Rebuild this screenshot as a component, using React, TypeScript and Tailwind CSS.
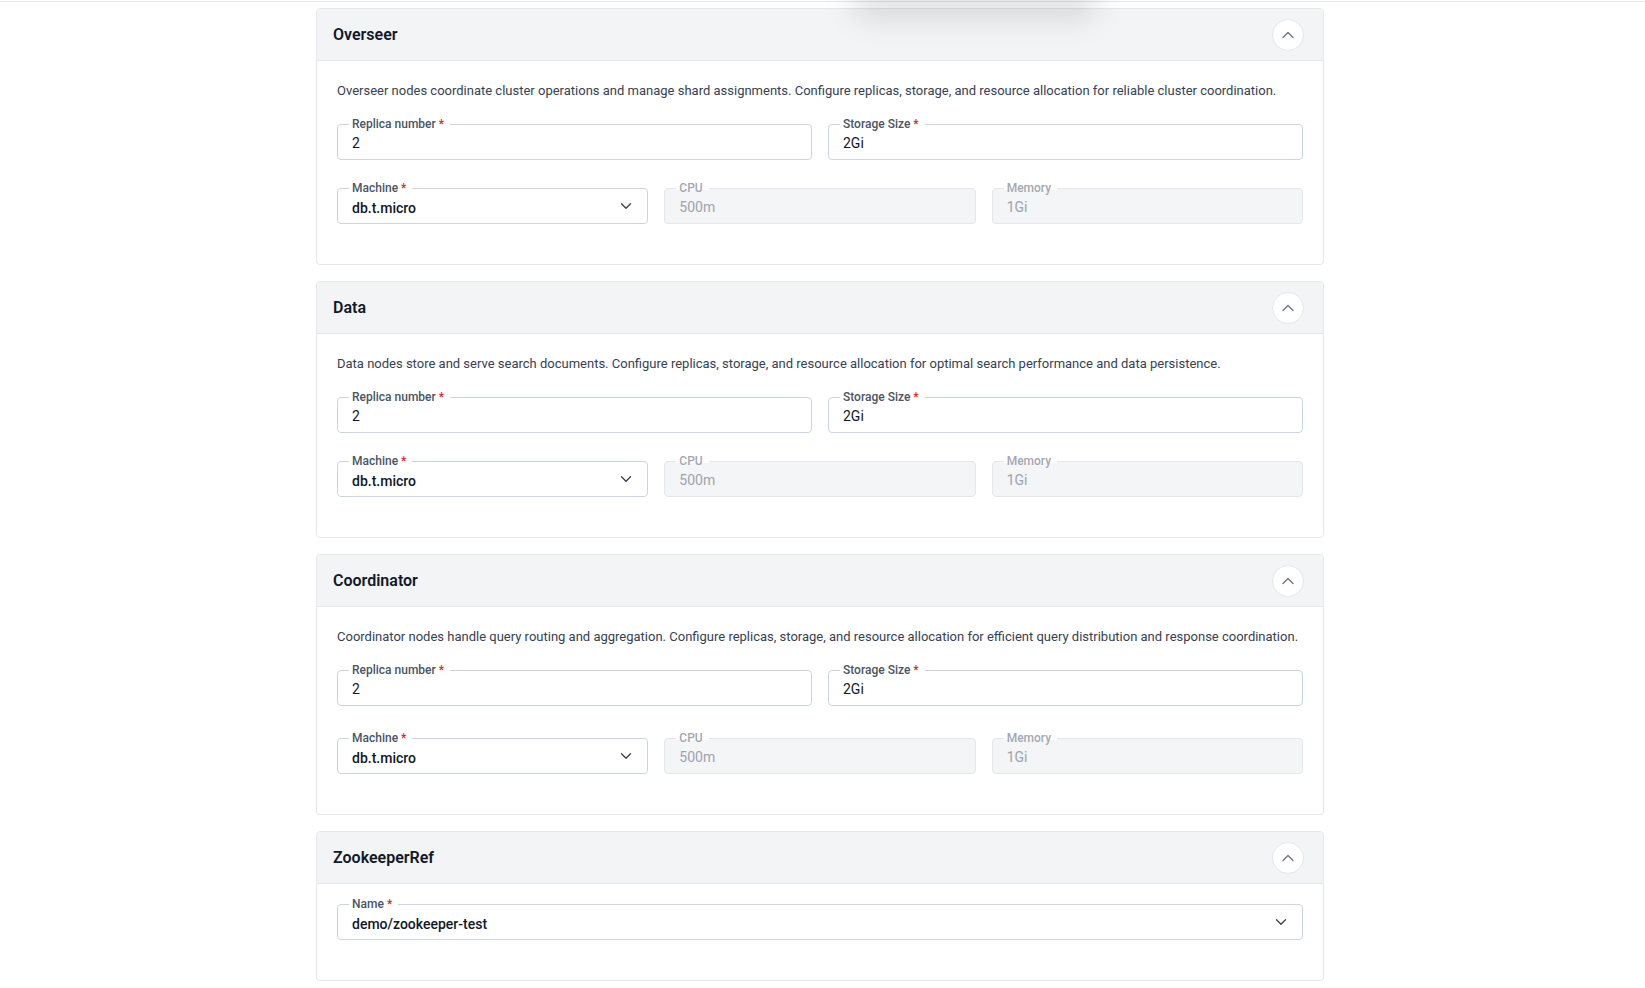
import { ChevronDown, ChevronUp } from "lucide-react";

type FieldProps = {
  label: string;
  value: string;
  required?: boolean;
  disabled?: boolean;
  select?: boolean;
};

// outlined input with the label sitting in a notch of the top border
function Field({ label, value, required, disabled, select }: FieldProps) {
  return (
    <div
      className={`relative flex h-[36px] items-center rounded border pl-[14px] pr-[12px] ${
        disabled ? "border-[#e5e7eb] bg-[#f4f5f6]" : "border-[#cbd5e1] bg-white"
      }`}
    >
      <span
        className={`absolute left-[11px] top-[-9px] pl-[3px] pr-[6px] text-xs font-medium leading-4 ${
          disabled ? "text-[#a3a8b0]" : "text-[#4b5563]"
        }`}
      >
        <span className="absolute inset-x-0 top-[7px] h-[3px] bg-white" />
        <span className="relative">
          {label}
          {required && <span className="ml-[3px] text-[#dc2626]">*</span>}
        </span>
      </span>
      <span
        className={`flex-1 truncate text-sm ${
          disabled
            ? "pt-[1px] text-[#9ca3af]"
            : select
            ? "pt-[3px] font-medium text-[#111827]"
            : "pt-[1px] text-[#111827]"
        }`}
      >
        {value}
      </span>
      {select && (
        <ChevronDown size={18} strokeWidth={1.75} className="text-[#374151]" />
      )}
    </div>
  );
}

function Section({
  title,
  children,
}: {
  title: string;
  children: React.ReactNode;
}) {
  return (
    <div className="mb-4 overflow-hidden rounded border border-[#e5e7eb] bg-white">
      <div className="flex h-[52px] items-center justify-between border-b border-[#e5e7eb] bg-[#f3f4f6] pl-4 pr-[19px]">
        <h2 className="text-base font-semibold text-[#111827]">{title}</h2>
        <button className="flex h-8 w-8 items-center justify-center rounded-full border border-[#e5e7eb] bg-white text-[#6b7280]">
          <ChevronUp size={20} strokeWidth={1.5} />
        </button>
      </div>
      <div className="px-5 pb-10 pt-5">{children}</div>
    </div>
  );
}

type NodeGroup = {
  title: string;
  description: string;
  rowGap: string;
};

const groups: NodeGroup[] = [
  {
    title: "Overseer",
    description:
      "Overseer nodes coordinate cluster operations and manage shard assignments. Configure replicas, storage, and resource allocation for reliable cluster coordination.",
    rowGap: "mt-[28px]",
  },
  {
    title: "Data",
    description:
      "Data nodes store and serve search documents. Configure replicas, storage, and resource allocation for optimal search performance and data persistence.",
    rowGap: "mt-[28px]",
  },
  {
    title: "Coordinator",
    description:
      "Coordinator nodes handle query routing and aggregation. Configure replicas, storage, and resource allocation for efficient query distribution and response coordination.",
    rowGap: "mt-[32px]",
  },
];

export default function App() {
  return (
    <div className="relative min-h-screen overflow-hidden bg-white font-['Roboto',sans-serif]">
      <div className="mt-px h-px bg-[#e5e7eb]" />
      {/* shadow spilling down from the menu above */}
      <div className="pointer-events-none absolute left-[850px] top-[-26px] z-10 h-[46px] w-[250px] rounded-full bg-black/10 blur-[14px]" />

      <div className="ml-[316px] w-[1008px] pt-[6px]">
        {groups.map((g) => (
          <Section key={g.title} title={g.title}>
            <p className="mb-[23px] text-[13px] leading-5 text-[#374151]">
              {g.description}
            </p>
            <div className="grid grid-cols-2 gap-4">
              <Field label="Replica number" value="2" required />
              <Field label="Storage Size" value="2Gi" required />
            </div>
            <div className={`grid grid-cols-3 gap-4 ${g.rowGap}`}>
              <Field label="Machine" value="db.t.micro" required select />
              <Field label="CPU" value="500m" disabled />
              <Field label="Memory" value="1Gi" disabled />
            </div>
          </Section>
        ))}

        <Section title="ZookeeperRef">
          <Field label="Name" value="demo/zookeeper-test" required select />
        </Section>
      </div>
    </div>
  );
}
